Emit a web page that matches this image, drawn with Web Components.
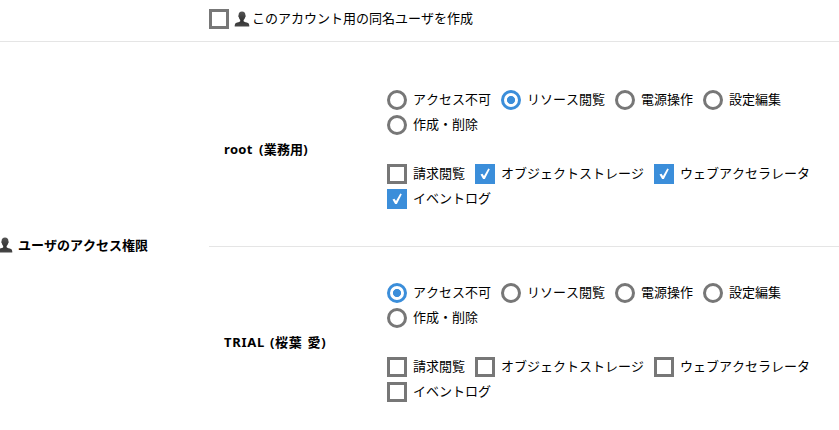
<!DOCTYPE html>
<html lang="ja">
<head>
<meta charset="utf-8">
<title>ユーザのアクセス権限</title>
<style>
  body {
    margin: 0;
    background: #fff;
    color: #000;
    overflow: hidden;
    font: 13px/20px "Noto Sans", "Noto Sans CJK JP", sans-serif;
    font-kerning: none;
  }
</style>
</head>
<body>
<access-form>
  <form-row>
    <choice-item class="big">
      <user-icon></user-icon>このアカウント用の同名ユーザを作成
    </choice-item>
  </form-row>
  <form-row class="access">
    <span slot="label"><user-icon></user-icon>ユーザのアクセス権限</span>
    <account-row name="root (業務用)" style="--name-spacing:0.2px;--name-gap:3px">
      <choice-item slot="level" type="radio">アクセス不可</choice-item>
      <choice-item slot="level" type="radio" checked>リソース閲覧</choice-item>
      <choice-item slot="level" type="radio">電源操作</choice-item>
      <choice-item slot="level" type="radio">設定編集</choice-item>
      <choice-item slot="level" type="radio">作成・削除</choice-item>
      <choice-item slot="option">請求閲覧</choice-item>
      <choice-item slot="option" checked>オブジェクトストレージ</choice-item>
      <choice-item slot="option" checked>ウェブアクセラレータ</choice-item>
      <choice-item slot="option" checked>イベントログ</choice-item>
    </account-row>
    <account-row name="TRIAL (桜葉 愛)" style="--name-spacing:0.7px;--name-gap:1px">
      <choice-item slot="level" type="radio" checked>アクセス不可</choice-item>
      <choice-item slot="level" type="radio">リソース閲覧</choice-item>
      <choice-item slot="level" type="radio">電源操作</choice-item>
      <choice-item slot="level" type="radio">設定編集</choice-item>
      <choice-item slot="level" type="radio">作成・削除</choice-item>
      <choice-item slot="option">請求閲覧</choice-item>
      <choice-item slot="option">オブジェクトストレージ</choice-item>
      <choice-item slot="option">ウェブアクセラレータ</choice-item>
      <choice-item slot="option">イベントログ</choice-item>
    </account-row>
  </form-row>
</access-form>

<script>
class UserIcon extends HTMLElement {
  constructor() {
    super();
    this.attachShadow({ mode: "open" });
    this.shadowRoot.innerHTML = `
        <style>
         :host{
            display:inline-block;
            width:16px;
            height:16px;
            vertical-align:-4px;
         }
         svg{
            display:block;
         }
        </style>
        <svg width="16" height="16" viewBox="0 0 16 16">
          <defs>
            <linearGradient id="g" x1="0" y1="0" x2="0" y2="1">
              <stop offset="0" stop-color="#555"/>
              <stop offset=".6" stop-color="#333"/>
              <stop offset="1" stop-color="#484848"/>
            </linearGradient>
          </defs>
          <path fill="url(#g)" d="M8 .5C5.700.5 4.500 2 4.600 4.200c-.5.2-.4 1.700.2 2 .2 1.200.7 2.100 1.400 2.700v1.300C5.700 11 3.500 11.200 2 12.100.9 12.800.7 14 .7 15.500h14.600c0-1.500-.2-2.700-1.300-3.400-1.500-.9-3.700-1.100-4.400-1.900V8.900c.7-.6 1.400-1.500 1.600-2.700.6-.3.7-1.800.2-2C11.500 2 10.300.5 8 .5z"/>
        </svg>`;
  }
}

class ChoiceItem extends HTMLElement {
  constructor() {
    super();
    this.attachShadow({ mode: "open" });
  }

  connectedCallback() {
    this._render();
    this.addEventListener("click", this._toggle.bind(this));
  }

  _toggle() {
    if (this.getAttribute("type") === "radio") {
      this.parentElement
        .querySelectorAll('choice-item[type="radio"]')
        .forEach((item) => item.removeAttribute("checked"));
      this.setAttribute("checked", "");
    } else {
      this.toggleAttribute("checked");
    }
  }

  _render() {
    this.shadowRoot.innerHTML = `
        <style>
         :host{
            display:flex;
            gap:6px;
            height:20px;
            white-space:nowrap;
            cursor:default;
         }
         :host(.big){
            gap:5px;
         }
         ::slotted(user-icon){
            margin-right:2px;
         }
         .mark{
            box-sizing:border-box;
            flex:none;
            width:20px;
            height:20px;
            border:3px solid #777;
            background:#fff;
         }
         :host([type="radio"]) .mark{
            border-radius:50%;
         }
         :host([checked]) .mark{
            border-color:#3b8eda;
            background:#3b8eda;
         }
         :host([type="radio"][checked]) .mark{
            background:radial-gradient(circle, #3b8eda 3.7px, #fff 4.4px) padding-box;
         }
         svg{
            display:none;
         }
         :host([checked]:not([type="radio"])) svg{
            display:block;
         }
         .text{
            margin-top:-1px;
         }
        </style>
        <span class="mark"><svg width="14" height="14" viewBox="0 0 14 14"><path d="M2.500 7.500L4.500 6.700L6 9L10.300 1.500L11.800 2.300L6.900 12L5.100 12z" fill="#fff"/></svg></span>
        <span class="text"><slot></slot></span>`;
  }
}

class AccountRow extends HTMLElement {
  constructor() {
    super();
    this.attachShadow({ mode: "open" });
    this.shadowRoot.innerHTML = `
        <style>
         :host{
            display:flex;
            align-items:center;
            padding:36px 0 37px 15px;
         }
         :host(:first-of-type){
            padding-top:48px;
            border-bottom:1px solid #e5e5e5;
         }
         .name{
            flex:none;
            width:163px;
            margin-bottom:2px;
            font-weight:bold;
            letter-spacing:var(--name-spacing, 0);
            word-spacing:var(--name-gap, 0);
         }
         .choices{
            flex:1;
         }
         .group{
            display:flex;
            flex-wrap:wrap;
            gap:5px 10px;
         }
         .group + .group{
            margin-top:29px;
         }
        </style>
        <div class="name"></div>
        <div class="choices">
          <div class="group"><slot name="level"></slot></div>
          <div class="group"><slot name="option"></slot></div>
        </div>`;
  }

  connectedCallback() {
    this.shadowRoot.querySelector(".name").textContent = this.getAttribute("name");
  }
}

class FormRow extends HTMLElement {
  constructor() {
    super();
    this.attachShadow({ mode: "open" });
    this.shadowRoot.innerHTML = `
        <style>
         :host{
            display:flex;
            align-items:center;
            padding:9px 0 12px;
            border-bottom:1px solid #e5e5e5;
         }
         :host(.access){
            padding:0;
         }
         .label{
            flex:none;
            width:209px;
            font-weight:bold;
         }
         ::slotted([slot="label"]){
            display:flex;
            align-items:center;
            gap:5px;
            margin:9px 0 0 -3px;
         }
         .content{
            flex:1;
         }
        </style>
        <div class="label"><slot name="label"></slot></div>
        <div class="content"><slot></slot></div>`;
  }
}

class AccessForm extends HTMLElement {
  constructor() {
    super();
    this.attachShadow({ mode: "open" });
    this.shadowRoot.innerHTML = `
        <style>
         :host{
            display:block;
         }
        </style>
        <slot></slot>`;
  }
}

customElements.define("user-icon", UserIcon);
customElements.define("choice-item", ChoiceItem);
customElements.define("account-row", AccountRow);
customElements.define("form-row", FormRow);
customElements.define("access-form", AccessForm);
</script>
</body>
</html>
